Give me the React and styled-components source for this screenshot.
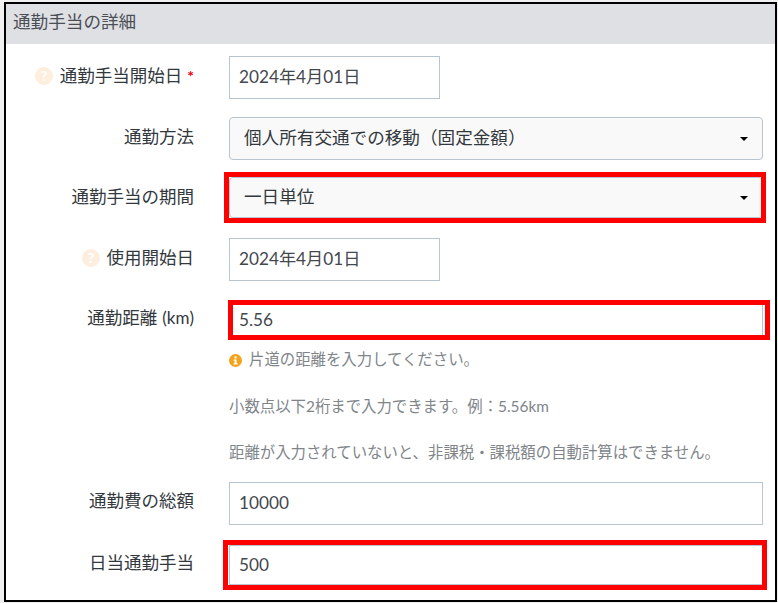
import React from "react";
import styled, { createGlobalStyle } from "styled-components";

const Global = createGlobalStyle`
  html, body { margin: 0; padding: 0; background: #f0f0f0; }
  body { font-family: Lato, "Noto Sans CJK JP", sans-serif; }
`;

const Shot = styled.div`
  width: 778px;
  height: 603px;
  padding: 2px 1px 1px 4px;
  box-sizing: border-box;
  background: #f0f0f0;
`;

const Panel = styled.section`
  height: 100%;
  box-sizing: border-box;
  background: #fff;
  border: 2px solid #000;
  display: flex;
  flex-direction: column;
`;

const Header = styled.h2`
  margin: 0;
  height: 40px;
  padding: 0 0 4px 7px;
  box-sizing: border-box;
  display: flex;
  align-items: center;
  background: #dfe0e4;
  color: #4a4f55;
  font-size: 17.6px;
  font-weight: 400;
  line-height: 1;
`;

const Form = styled.div`
  display: flex;
  flex-direction: column;
  padding-top: 12px;
`;

const Row = styled.div`
  display: grid;
  grid-template-columns: 188px 1fr;
  column-gap: 35px;
  margin-bottom: ${(p) => p.$gap ?? 18}px;
`;

const Label = styled.label`
  display: flex;
  justify-content: flex-end;
  align-items: center;
  gap: 7px;
  height: ${(p) => p.$h ?? 43}px;
  padding-bottom: ${(p) => p.$pb ?? 4}px;
  box-sizing: border-box;
  color: #33383d;
  font-size: 17.5px;
  line-height: 1;
  white-space: nowrap;
`;

const Latin = styled.span`
  font-size: 17px;
  margin-left: 5px;
`;

const Star = styled.span`
  color: #e8000d;
  font-size: 16px;
  font-weight: 700;
  margin-left: -2px;
`;

const Field = styled.div`
  position: relative;
  width: ${(p) => p.$w ?? 534}px;
`;

const Mark = styled.div`
  position: absolute;
  left: ${(p) => -p.$l}px;
  right: ${(p) => -p.$r}px;
  top: ${(p) => -p.$t}px;
  bottom: ${(p) => -p.$b}px;
  border: 5px solid #ff0000;
  pointer-events: none;
`;

const Box = styled.div`
  height: ${(p) => p.$h ?? 43}px;
  box-sizing: border-box;
  padding: 0 0 1px 9px;
  display: flex;
  align-items: center;
  border: 1px solid #b8c4ce;
  background: #fff;
  color: #43484d;
  font-size: 17.2px;
  line-height: 1;
`;

const Select = styled(Box)`
  padding: 0 14px 2px 14px;
  justify-content: space-between;
  border-radius: 4px;
  background: #f9f9f9;
  color: #33383d;
  font-size: 17.6px;
`;

const Caret = styled.span`
  width: 0;
  height: 0;
  margin-top: 3px;
  border-left: 4px solid transparent;
  border-right: 4px solid transparent;
  border-top: 4px solid #000;
`;

const Hints = styled.div`
  display: flex;
  flex-direction: column;
  margin-top: 10px;
`;

const Hint = styled.p`
  margin: 0 0 ${(p) => p.$gap ?? 27}px;
  height: 20px;
  display: flex;
  align-items: center;
  gap: 7px;
  color: #80858a;
  font-size: ${(p) => p.$size ?? 15.4}px;
  line-height: 1;
  white-space: nowrap;
`;

const Help = () => (
  <svg width="18" height="18" viewBox="0 0 18 18" aria-hidden="true">
    <circle cx="9" cy="9" r="9" fill="#fdeedd" />
    <text x="9" y="14" textAnchor="middle" fontSize="14" fontWeight="700" fontFamily="Lato, sans-serif" fill="#fff">?</text>
  </svg>
);

const Info = () => (
  <svg width="13" height="13" viewBox="0 0 14 14" aria-hidden="true">
    <circle cx="7" cy="7" r="7" fill="#f5a31a" />
    <rect x="5.9" y="2.6" width="2.3" height="2.2" fill="#fff" />
    <path d="M5 6h3.2v4H9.2v1.3H5V10h1V7.3H5z" fill="#fff" />
  </svg>
);

export default function App() {
  return (
    <Shot>
      <Global />
      <Panel>
        <Header>通勤手当の詳細</Header>
        <Form>
          <Row>
            <Label>
              <Help />
              <span>通勤手当開始日</span>
              <Star>*</Star>
            </Label>
            <Field $w={211}>
              <Box>2024年4月01日</Box>
            </Field>
          </Row>
          <Row $gap={17}>
            <Label>通勤方法</Label>
            <Field>
              <Select>
                個人所有交通での移動（固定金額）
                <Caret />
              </Select>
            </Field>
          </Row>
          <Row $gap={20}>
            <Label $h={41} $pb={2}>通勤手当の期間</Label>
            <Field>
              <Select $h={41}>
                一日単位
                <Caret />
              </Select>
              <Mark $l={5} $r={3} $t={5} $b={5} />
            </Field>
          </Row>
          <Row $gap={19}>
            <Label>
              <Help />
              <span>使用開始日</span>
            </Label>
            <Field $w={211}>
              <Box>2024年4月01日</Box>
            </Field>
          </Row>
          <Row $gap={5}>
            <Label $h={40}>
              <span>
                通勤距離<Latin>(km)</Latin>
              </span>
            </Label>
            <div>
              <Field>
                <Box $h={40}>5.56</Box>
                <Mark $l={1} $r={7} $t={0} $b={0} />
              </Field>
              <Hints>
                <Hint>
                  <Info />
                  片道の距離を入力してください。
                </Hint>
                <Hint $gap={26}>小数点以下2桁まで入力できます。例：5.56km</Hint>
                <Hint $gap={14}>距離が入力されていないと、非課税・課税額の自動計算はできません。</Hint>
              </Hints>
            </div>
          </Row>
          <Row $gap={20}>
            <Label $pb={6}>通勤費の総額</Label>
            <Field>
              <Box>10000</Box>
            </Field>
          </Row>
          <Row $gap={0}>
            <Label $h={40}>日当通勤手当</Label>
            <Field>
              <Box $h={40}>500</Box>
              <Mark $l={6} $r={4} $t={5} $b={5} />
            </Field>
          </Row>
        </Form>
      </Panel>
    </Shot>
  );
}
